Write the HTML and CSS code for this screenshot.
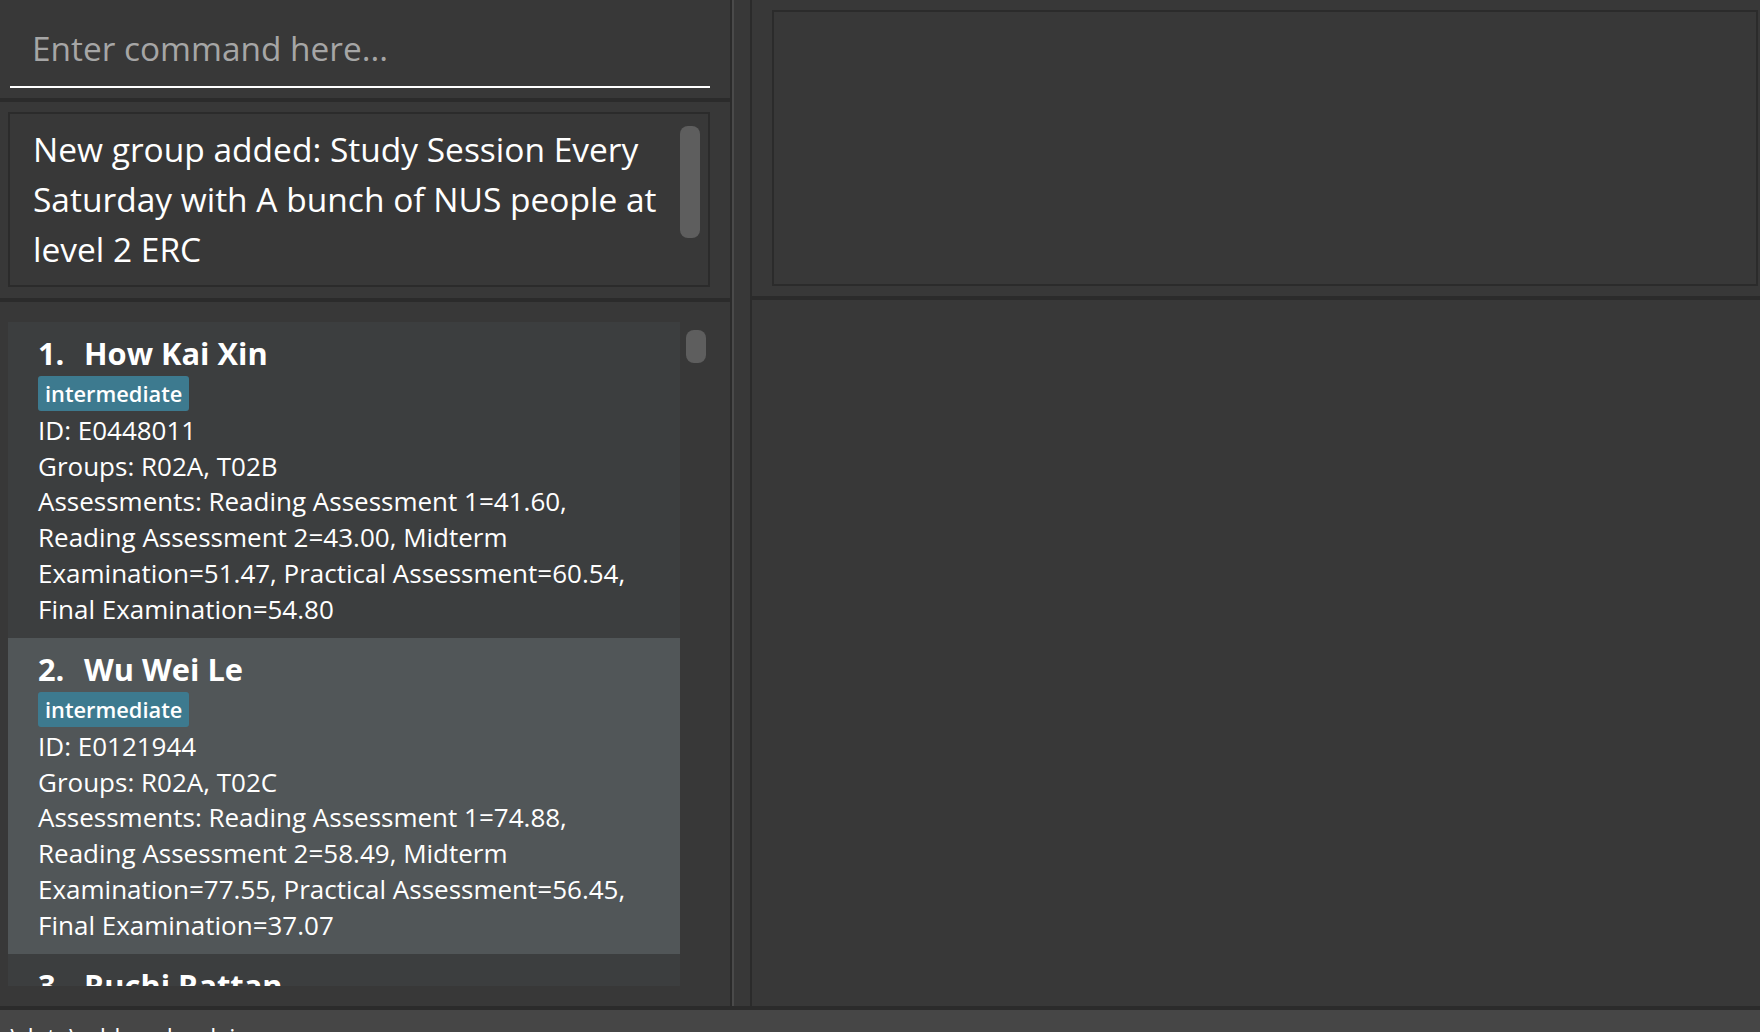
FILE: index.html
```html
<!DOCTYPE html>
<html>
<head>
<meta charset="utf-8">
<link rel="stylesheet" href="styles.css">
</head>
<body>
<div class="app">
  <div class="main">
    <div class="left">
      <div class="command-pane">
        <div class="command-input">Enter command here...</div>
      </div>
      <div class="result-pane">
        <div class="result-box">
          <div class="result-text">New group added: Study Session Every Saturday with A bunch of NUS people at level 2 ERC</div>
          <div class="scroll-col"><div class="thumb thumb-long"></div></div>
        </div>
      </div>
      <div class="list-pane">
        <div class="list-viewport">
          <div class="card">
            <div class="card-title"><span class="card-index">1.</span><span>How Kai Xin</span></div>
            <div class="tags"><span class="tag">intermediate</span></div>
            <div class="card-line">ID: E0448011</div>
            <div class="card-line">Groups: R02A, T02B</div>
            <div class="card-line wrap">Assessments: Reading Assessment 1=41.60, Reading Assessment 2=43.00, Midterm Examination=51.47, Practical Assessment=60.54, Final Examination=54.80</div>
          </div>
          <div class="card card-alt">
            <div class="card-title"><span class="card-index">2.</span><span>Wu Wei Le</span></div>
            <div class="tags"><span class="tag">intermediate</span></div>
            <div class="card-line">ID: E0121944</div>
            <div class="card-line">Groups: R02A, T02C</div>
            <div class="card-line wrap">Assessments: Reading Assessment 1=74.88, Reading Assessment 2=58.49, Midterm Examination=77.55, Practical Assessment=56.45, Final Examination=37.07</div>
          </div>
          <div class="card">
            <div class="card-title"><span class="card-index">3.</span><span>Ruchi Rattan</span></div>
            <div class="tags"><span class="tag">beginner</span></div>
            <div class="card-line">ID: E0123456</div>
          </div>
        </div>
        <div class="list-scroll"><div class="thumb thumb-short"></div></div>
      </div>
    </div>
    <div class="divider"><div class="divider-line"></div></div>
    <div class="right">
      <div class="right-top"><div class="right-box"></div></div>
      <div class="right-bottom"></div>
    </div>
  </div>
  <div class="status-bar">.\data\addressbook.json</div>
</div>
</body>
</html>
```

FILE: styles.css
```css
html, body {
  margin: 0;
  padding: 0;
  background: #383838;
}

body {
  font-family: "Open Sans", "Noto Sans", sans-serif;
  color: #ffffff;
  width: 1760px;
  height: 1032px;
  overflow: hidden;
}

.app {
  display: flex;
  flex-direction: column;
  height: 1032px;
}

.main {
  display: flex;
  height: 1006px;
}

.left {
  width: 730px;
  display: flex;
  flex-direction: column;
}

.command-pane {
  height: 102px;
  box-sizing: border-box;
  border-bottom: 4px solid #2b2b2b;
  padding-left: 10px;
}

.command-input {
  width: 700px;
  height: 88px;
  box-sizing: border-box;
  border-bottom: 2px solid #ffffff;
  color: #a6a6a6;
  font-size: 33.4px;
  line-height: 48px;
  padding: 24px 0 0 22px;
}

.result-pane {
  height: 200px;
  box-sizing: border-box;
  border-bottom: 4px solid #2b2b2b;
  padding: 10px 20px 0 8px;
}

.result-box {
  height: 175px;
  box-sizing: border-box;
  border: 2px solid #2b2b2b;
  display: flex;
}

.result-text {
  width: 640px;
  padding: 10px 0 0 23px;
  font-size: 33.5px;
  line-height: 50px;
}

.scroll-col {
  flex: 1;
  padding: 12px 0 0 7px;
}

.thumb {
  width: 20px;
  background: #5e5e5e;
  border-radius: 8px;
}

.thumb-long {
  height: 112px;
}

.thumb-short {
  height: 33px;
}

.list-pane {
  flex: 1;
  display: flex;
  padding: 20px 0 20px 8px;
  min-height: 0;
}

.list-viewport {
  width: 672px;
  overflow: hidden;
}

.list-scroll {
  padding: 8px 0 0 6px;
}

.card {
  background: #3c3e3f;
  height: 316px;
  box-sizing: border-box;
  padding: 9px 20px 0 30px;
}

.card-alt {
  background: #515658;
}

.card-title {
  font-size: 30.8px;
  font-weight: 700;
  line-height: 44px;
  display: flex;
  gap: 18px;
}

.card-index {
  width: 28px;
}

.tags {
  display: flex;
  margin-top: 1px;
  margin-bottom: 2px;
}

.tag {
  background: #3d7a8f;
  border-radius: 3px;
  font-size: 21.8px;
  font-weight: 600;
  line-height: 35px;
  padding: 0 7px;
  color: #ffffff;
}

.card-line {
  font-size: 26px;
  line-height: 35.7px;
  color: #ffffff;
}

.wrap {
  width: 600px;
}

.divider {
  width: 22px;
  box-sizing: border-box;
  border-left: 2px solid #2b2b2b;
  border-right: 2px solid #2b2b2b;
}

.divider-line {
  width: 2px;
  height: 100%;
  background: #4a4a4a;
}

.right {
  flex: 1;
  display: flex;
  flex-direction: column;
}

.right-top {
  height: 300px;
  box-sizing: border-box;
  border-bottom: 4px solid #2b2b2b;
  padding: 10px 2px 0 20px;
}

.right-box {
  height: 276px;
  box-sizing: border-box;
  border: 2px solid #2b2b2b;
}

.right-bottom {
  flex: 1;
}

.status-bar {
  height: 26px;
  box-sizing: border-box;
  border-top: 4px solid #2b2b2b;
  background: #464646;
  font-size: 24px;
  line-height: 36px;
  padding: 9px 0 0 4px;
  overflow: hidden;
  color: #ffffff;
}
```
